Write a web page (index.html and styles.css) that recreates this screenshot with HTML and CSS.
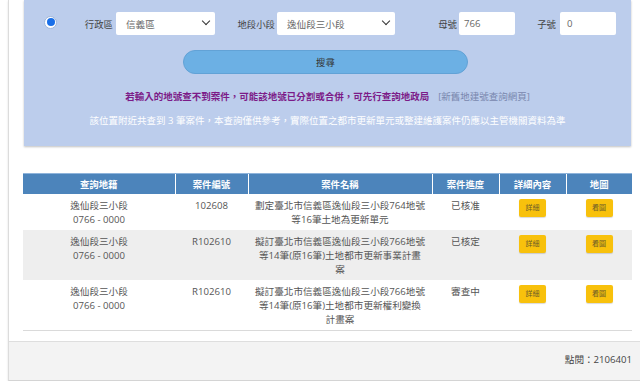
FILE: index.html
```html
<!DOCTYPE html>
<html lang="zh-Hant">
<head>
    <meta charset="UTF-8">
    <meta name="viewport" content="width=device-width, initial-scale=1.0">
    <title>都市更新案件查詢</title>
    <link rel="stylesheet" href="styles.css">
</head>
<body>
    <div class="card">
        <div class="card-body">
            <section class="search-panel">
                <div class="field-row">
                    <span class="radio"></span>
                    <label class="lbl">行政區</label>
                    <div class="select w99">信義區<span class="chev"></span></div>
                    <label class="lbl">地段小段</label>
                    <div class="select w118">逸仙段三小段<span class="chev"></span></div>
                    <label class="lbl">母號</label>
                    <div class="input">766</div>
                    <label class="lbl">子號</label>
                    <div class="input pad7">0</div>
                </div>

                <div class="btn-row">
                    <button class="search-btn">搜尋</button>
                </div>

                <p class="warn">若輸入的地號查不到案件，可能該地號已分割或合併，可先行查詢地政局<a href="#" class="land-link">[新舊地建號查詢網頁]</a></p>
                <p class="result-note">該位置附近共查到 3 筆案件，本查詢僅供參考，實際位置之都市更新單元或整建維護案件仍應以主管機關資料為準</p>
            </section>

            <table class="case-table">
                <thead>
                    <tr>
                        <th class="c1">查詢地籍</th>
                        <th class="c2">案件編號</th>
                        <th class="c3">案件名稱</th>
                        <th class="c4">案件進度</th>
                        <th class="c5">詳細內容</th>
                        <th class="c6">地圖</th>
                    </tr>
                </thead>
                <tbody>
                    <tr>
                        <td>逸仙段三小段<br>0766 - 0000</td>
                        <td>102608</td>
                        <td>劃定臺北市信義區逸仙段三小段764地號<br>等16筆土地為更新單元</td>
                        <td>已核准</td>
                        <td><span class="tag">詳細</span></td>
                        <td><span class="tag">看圖</span></td>
                    </tr>
                    <tr class="alt">
                        <td>逸仙段三小段<br>0766 - 0000</td>
                        <td>R102610</td>
                        <td>擬訂臺北市信義區逸仙段三小段766地號<br>等14筆(原16筆)土地都市更新事業計畫<br>案</td>
                        <td>已核定</td>
                        <td><span class="tag">詳細</span></td>
                        <td><span class="tag">看圖</span></td>
                    </tr>
                    <tr>
                        <td>逸仙段三小段<br>0766 - 0000</td>
                        <td>R102610</td>
                        <td>擬訂臺北市信義區逸仙段三小段766地號<br>等14筆(原16筆)土地都市更新權利變換<br>計畫案</td>
                        <td>審查中</td>
                        <td><span class="tag">詳細</span></td>
                        <td><span class="tag">看圖</span></td>
                    </tr>
                </tbody>
            </table>
        </div>

        <footer class="card-footer">點閱：2106401</footer>
    </div>
</body>
</html>
```

FILE: styles.css
```css
* {
    margin: 0;
    padding: 0;
    box-sizing: border-box;
}

body {
    font-family: "Open Sans", "Noto Sans CJK TC", sans-serif;
    font-size: 9.6px;
    color: #555;
    background-color: #fff;
}

.card {
    margin-left: 8px;
    border-left: 1px solid #dcdcdc;
    border-bottom: 1px solid #d4d4d4;
    box-shadow: 0 1px 2px rgba(0, 0, 0, 0.12);
}

.card-body {
    padding: 0 9px 10px 15px;
}

/* search panel */
.search-panel {
    background-color: #bccdec;
    padding-top: 12px;
    height: 146px;
    box-shadow: 0 1px 2px rgba(0, 0, 0, 0.25);
    text-align: center;
}

.field-row {
    display: grid;
    grid-template-columns: 33px 56px 102px 60px 120px 62px 58px 41px 60px;
    align-items: center;
    height: 23px;
}

.radio {
    justify-self: end;
    width: 13px;
    height: 13px;
    margin-top: -3px;
    border-radius: 50%;
    background-color: #fff;
    border: 1px solid #9fb6da;
    display: flex;
    align-items: center;
    justify-content: center;
}

.radio::after {
    content: "";
    width: 8px;
    height: 8px;
    border-radius: 50%;
    background-color: #1a6fe8;
}

.lbl {
    text-align: right;
    color: #444;
    font-size: 9.4px;
}

.select,
.input {
    justify-self: end;
    height: 23px;
    background-color: #fff;
    border-radius: 2px;
    display: flex;
    align-items: center;
    color: #666;
    text-align: left;
    position: relative;
}

.select {
    padding-left: 10px;
}

.w99 { width: 99px; }
.w118 { width: 118px; }

.input {
    width: 56px;
    padding-left: 5px;
}

.pad7 { padding-left: 7px; }

.chev {
    position: absolute;
    right: 6px;
    top: 6px;
    width: 6px;
    height: 6px;
    border-right: 1.3px solid #333;
    border-bottom: 1.3px solid #333;
    transform: rotate(45deg);
}

.btn-row {
    margin-top: 15px;
    padding-right: 4px;
}

.search-btn {
    width: 285px;
    height: 24px;
    border: 1px solid #62a2d6;
    border-radius: 12px;
    background-color: #6cb0e4;
    color: #333;
    font-family: inherit;
    font-size: 9.4px;
}

.warn {
    margin-top: 16px;
    color: #7c1b88;
    font-weight: bold;
    font-size: 9.5px;
    line-height: 14px;
}

.land-link {
    margin-left: 9px;
    color: #7987ae;
    font-weight: normal;
    text-decoration: none;
}

.result-note {
    margin-top: 10px;
    color: #fff;
    font-size: 9.5px;
    line-height: 14px;
}

/* result table */
.case-table {
    width: calc(100% + 2px);
    margin: 27px -1px 0;
    border-collapse: collapse;
    table-layout: fixed;
    border-bottom: 1px solid #dadada;
}

.case-table th {
    background-color: #4c84bb;
    color: #fff;
    font-weight: bold;
    font-size: 9.4px;
    height: 20px;
    border-left: 1px solid #fff;
    border-top: 1px solid #8fb4db;
}

.case-table th:first-child {
    border-left: none;
}

.c1 { width: 152px; }
.c2 { width: 73px; }
.c3 { width: 184px; }
.c4 { width: 67px; }
.c5 { width: 67px; }
.c6 { width: 66px; }

.case-table td {
    text-align: center;
    vertical-align: top;
    padding: 5px 2px 3px;
    line-height: 14px;
    font-size: 9.6px;
    color: #555;
}

.case-table tr.alt td {
    background-color: #eeeeee;
}

.tag {
    display: inline-block;
    width: 27px;
    height: 18px;
    line-height: 18px;
    background-color: #f8c10c;
    border-radius: 2px;
    box-shadow: 0 1px 1px rgba(0, 0, 0, 0.15);
    color: #6a5a2a;
    font-size: 7px;
}

.card-footer {
    background-color: #f3f3f3;
    border-top: 1px solid #dedede;
    height: 39px;
    line-height: 35px;
    text-align: right;
    padding-right: 8px;
    color: #444;
    font-size: 9.6px;
}
```
